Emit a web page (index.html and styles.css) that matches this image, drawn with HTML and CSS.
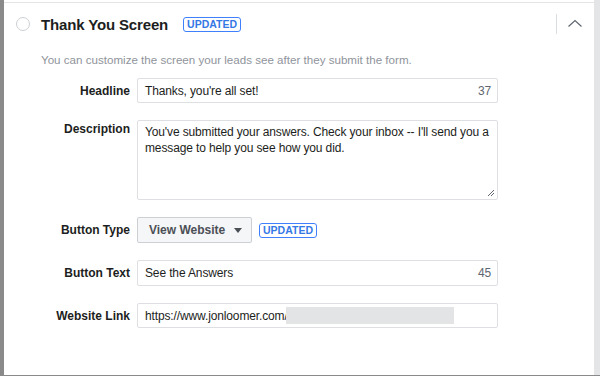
FILE: index.html
```html
<!DOCTYPE html>
<html lang="en">
<head>
  <meta charset="UTF-8">
  <title>Thank You Screen</title>
  <link rel="stylesheet" href="styles.css">
</head>
<body>

  <div id="panel">
    <div class="rule"></div>

    <div class="head">
      <span class="radio"></span>
      <h2>Thank You Screen</h2>
      <span class="badge">UPDATED</span>
      <div class="toggle">
        <svg width="16" height="10" viewBox="0 0 16 10">
          <path d="M1.5 7.5 L8 1.5 L14.5 7.5" fill="none" stroke="#606770" stroke-width="1.2"/>
        </svg>
      </div>
    </div>

    <p class="intro">You can customize the screen your leads see after they submit the form.</p>

    <div class="form">
      <label>Headline</label>
      <div class="field">
        <span>Thanks, you're all set!</span>
        <span class="count">37</span>
      </div>

      <label class="top">Description</label>
      <div class="field area">
        <span>You've submitted your answers. Check your inbox -- I'll send you a message to help you see how you did.</span>
        <svg class="grip" width="8" height="8" viewBox="0 0 8 8">
          <path d="M7 1 L1 7 M7 4 L4 7" stroke="#606770" stroke-width="1"/>
        </svg>
      </div>

      <label>Button Type</label>
      <div class="type-row">
        <button class="select">View Website <span class="caret"></span></button>
        <span class="badge">UPDATED</span>
      </div>

      <label>Button Text</label>
      <div class="field">
        <span>See the Answers</span>
        <span class="count">45</span>
      </div>

      <label>Website Link</label>
      <div class="field">
        <span>https://www.jonloomer.com/</span>
        <span class="redact"></span>
      </div>
    </div>
  </div>

</body>
</html>
```

FILE: styles.css
```css
body {
  margin: 0;
  background-color: #8a8a8a;
  font-family: "Liberation Sans", Arial, sans-serif;
  color: #1c1e21;
}

#panel {
  margin-left: 4px;
  width: 590px;
  height: 373px;
  background-color: white;
  border-right: 6px solid #e4e5e6;
  padding-top: 2px;
  box-sizing: content-box;
}

.rule {
  height: 1px;
  background-color: #e3e4e6;
}

.head {
  display: flex;
  align-items: center;
  height: 20px;
  margin-top: 11px;
  padding-left: 12px;
}

.radio {
  width: 12px;
  height: 12px;
  border: 1px solid #ccd0d5;
  border-radius: 50%;
  margin-right: 11px;
}

.head h2 {
  margin: 0;
  font-size: 15px;
  font-weight: bold;
  letter-spacing: -0.15px;
  margin-right: 15px;
}

.badge {
  display: inline-block;
  border: 1px solid #4080ff;
  border-radius: 3px;
  color: #3578e5;
  font-size: 10.5px;
  font-weight: bold;
  letter-spacing: 0;
  padding: 1px 3px 1px 3px;
  line-height: 11px;
}

.toggle {
  margin-left: auto;
  display: flex;
  align-items: center;
  height: 20px;
  border-left: 1px solid #dadde1;
  padding-left: 10px;
  margin-right: 11px;
}

.toggle svg {
  display: block;
  margin-top: -1px;
}

.intro {
  margin: 18px 0 0 37px;
  font-size: 11.6px;
  line-height: 16px;
  color: #90949c;
}

.form {
  display: grid;
  grid-template-columns: 126px 361px;
  grid-template-rows: 25px 80px 26px 26px 25px;
  column-gap: 7px;
  row-gap: 17px;
  margin-top: 10px;
  align-items: center;
}

.form label {
  text-align: right;
  font-size: 12px;
  font-weight: bold;
  color: #1c1e21;
}

.form label.top {
  align-self: start;
  padding-top: 2px;
}

.field {
  position: relative;
  display: flex;
  align-items: center;
  justify-content: space-between;
  height: 100%;
  box-sizing: border-box;
  border: 1px solid #dddfe2;
  border-radius: 2px;
  padding: 0 6px 0 7px;
  font-size: 12px;
  letter-spacing: -0.13px;
}

.field.area {
  align-items: flex-start;
  padding: 3px 2px 0 7px;
  line-height: 16px;
}

.field.area span {
  width: 350px;
}

.grip {
  position: absolute;
  right: 2px;
  bottom: 2px;
}

.count {
  color: #606770;
}

.redact {
  position: absolute;
  left: 148px;
  top: 3px;
  width: 168px;
  height: 17px;
  background-color: #e3e4e5;
}

.type-row {
  display: flex;
  align-items: center;
  height: 100%;
}

.select {
  height: 26px;
  width: 115px;
  background-color: #f5f6f7;
  border: 1px solid #ccd0d5;
  border-radius: 2px;
  font-family: inherit;
  font-size: 12px;
  font-weight: bold;
  color: #4b4f56;
  padding: 0 0 0 11px;
  text-align: left;
  margin-right: 7px;
}

.caret {
  display: inline-block;
  border-left: 4px solid transparent;
  border-right: 4px solid transparent;
  border-top: 5px solid #4b4f56;
  margin-left: 5px;
  vertical-align: 1px;
}
```
